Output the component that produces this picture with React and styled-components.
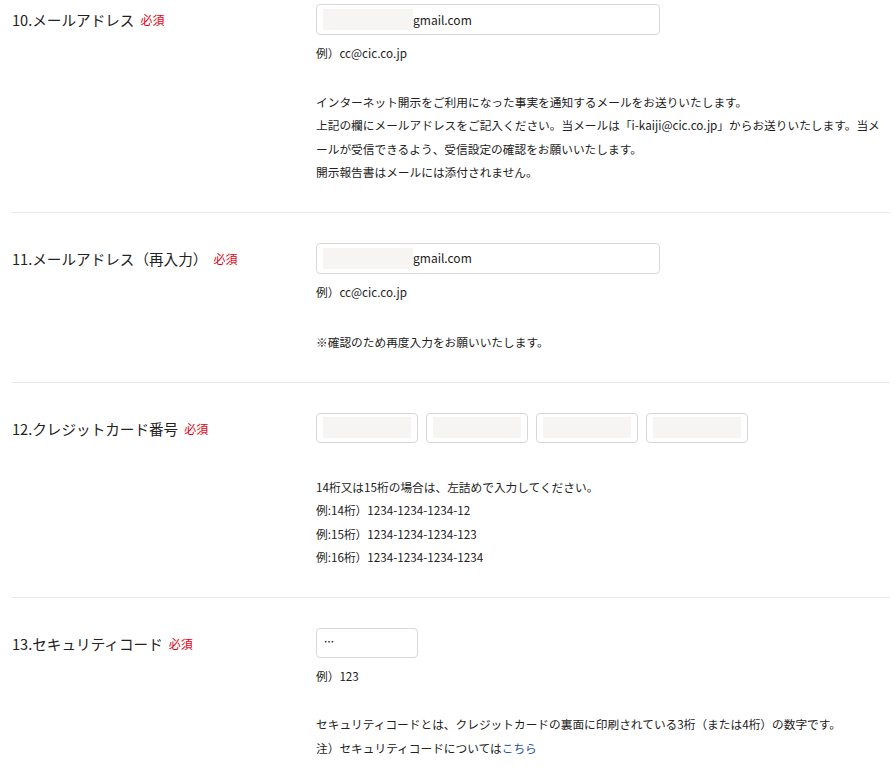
import React from 'react';
import styled, { createGlobalStyle } from 'styled-components';

const GlobalStyle = createGlobalStyle`
  html, body {
    margin: 0;
    padding: 0;
    background: #fff;
  }
  body {
    font-family: "Noto Sans CJK JP", "Noto Sans", sans-serif;
    color: #222;
  }
`;

// --- layout ---

const Form = styled.div`
  width: 878px;
  margin: 0 5px 0 12px;
`;

const Section = styled.section`
  display: grid;
  grid-template-columns: 304px 1fr;
  align-items: start;
  padding: ${(p) => (p.$first ? '4px' : '30px')} 0 28px;
  border-bottom: ${(p) => (p.$last ? 'none' : '1px solid #e8e8e8')};
`;

const Label = styled.div`
  display: flex;
  align-items: center;
  height: 31px;
  font-size: 14.6px;
  color: #222;
  white-space: nowrap;
`;

const Required = styled.span`
  margin-left: 6px;
  font-size: 12px;
  color: #e60012;
`;

const Field = styled.div`
  display: flex;
  flex-direction: column;
  font-size: 11.7px;
  line-height: 23.5px;
  color: #222;
`;

// --- inputs ---

const TextBox = styled.div`
  display: flex;
  align-items: center;
  box-sizing: border-box;
  width: ${(p) => p.$width}px;
  height: ${(p) => p.$height || 30}px;
  padding: 0 6px;
  border: 1px solid #d8d8d8;
  border-radius: 4px;
  background: #fff;
  font-size: 12px;
  color: #222;
`;

const Mask = styled.span`
  display: block;
  flex: ${(p) => (p.$fill ? '1' : 'none')};
  width: ${(p) => (p.$fill ? 'auto' : `${p.$width}px`)};
  height: 21px;
  background: #f6f5f3;
`;

const CardRow = styled.div`
  display: flex;
  gap: 8px;
`;

const Dots = styled.span`
  font-size: 10px;
  font-weight: 700;
  line-height: 1;
  color: #111;
  padding: 0 0 2px 1px;
`;

// --- texts ---

const Example = styled.p`
  margin: 6px 0 0;
`;

const Notes = styled.div`
  margin-top: ${(p) => p.$gap || 25}px;
  width: 569px;

  p {
    margin: 0;
  }
`;

const Link = styled.a`
  color: #1d4f9c;
  text-decoration: none;
`;

function EmailBox() {
  return (
    <TextBox $width={344} $height={31}>
      <Mask $width={90} />
      <span>gmail.com</span>
    </TextBox>
  );
}

export default function App() {
  return (
    <>
      <GlobalStyle />
      <Form>
        <Section $first>
          <Label>
            10.メールアドレス<Required>必須</Required>
          </Label>
          <Field>
            <EmailBox />
            <Example>例）cc@cic.co.jp</Example>
            <Notes>
              <p>インターネット開示をご利用になった事実を通知するメールをお送りいたします。</p>
              <p>
                上記の欄にメールアドレスをご記入ください。当メールは「i-kaiji@cic.co.jp」からお送りいたします。当メールが受信できるよう、受信設定の確認をお願いいたします。
              </p>
              <p>開示報告書はメールには添付されません。</p>
            </Notes>
          </Field>
        </Section>

        <Section>
          <Label>
            11.メールアドレス（再入力）<Required>必須</Required>
          </Label>
          <Field>
            <EmailBox />
            <Example>例）cc@cic.co.jp</Example>
            <Notes $gap={27}>
              <p>※確認のため再度入力をお願いいたします。</p>
            </Notes>
          </Field>
        </Section>

        <Section>
          <Label>
            12.クレジットカード番号<Required>必須</Required>
          </Label>
          <Field>
            <CardRow>
              {[0, 1, 2, 3].map((i) => (
                <TextBox key={i} $width={102}>
                  <Mask $fill />
                </TextBox>
              ))}
            </CardRow>
            <Notes $gap={32}>
              <p>14桁又は15桁の場合は、左詰めで入力してください。</p>
              <p>例:14桁）1234-1234-1234-12</p>
              <p>例:15桁）1234-1234-1234-123</p>
              <p>例:16桁）1234-1234-1234-1234</p>
            </Notes>
          </Field>
        </Section>

        <Section $last>
          <Label>
            13.セキュリティコード<Required>必須</Required>
          </Label>
          <Field>
            <TextBox $width={102}>
              <Dots>…</Dots>
            </TextBox>
            <Example>例）123</Example>
            <Notes>
              <p>セキュリティコードとは、クレジットカードの裏面に印刷されている3桁（または4桁）の数字です。</p>
              <p>
                注）セキュリティコードについては<Link href="#">こちら</Link>
              </p>
            </Notes>
          </Field>
        </Section>
      </Form>
    </>
  );
}
